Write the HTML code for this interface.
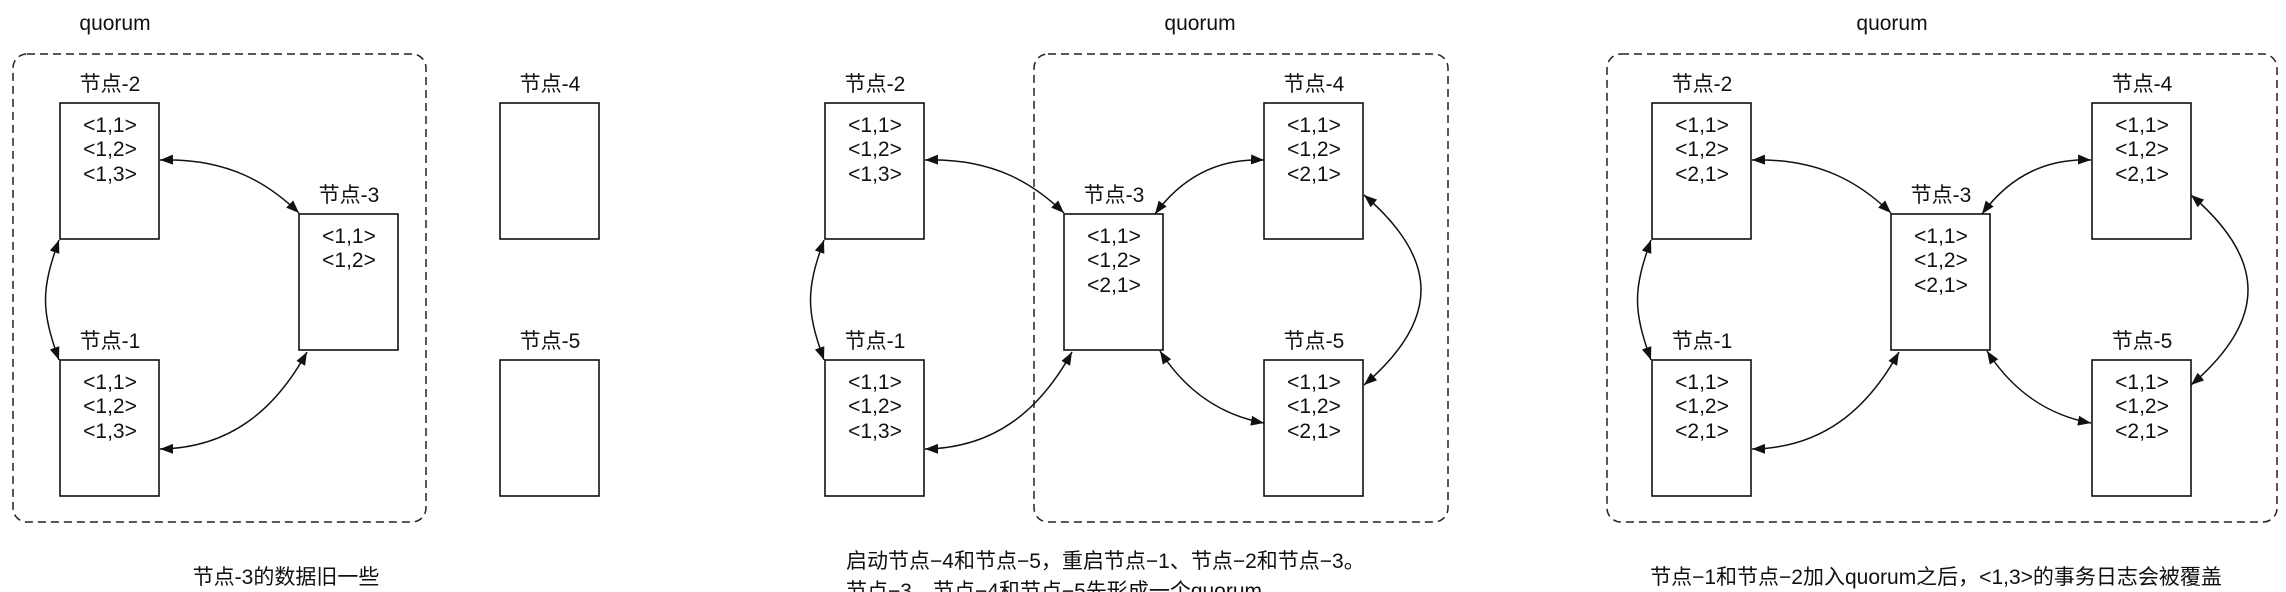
<!DOCTYPE html>
<html><head><meta charset="utf-8"><style>
html,body{margin:0;padding:0;background:#fff;}
svg{display:block;}
text{font-family:"Liberation Sans","Noto Sans CJK SC",sans-serif;font-size:21px;fill:#111;}
.c{text-anchor:middle;}
.b{fill:#fff;stroke:#111;stroke-width:1.6;}
.d{fill:none;stroke:#222;stroke-width:1.5;stroke-dasharray:8 5;}
.a{fill:none;stroke:#111;stroke-width:1.5;marker-start:url(#m);marker-end:url(#m);}
</style></head><body>
<svg width="2286" height="592" viewBox="0 0 2286 592" xmlns="http://www.w3.org/2000/svg">
<defs>
<marker id="m" markerWidth="14" markerHeight="12" refX="13" refY="5" orient="auto-start-reverse" markerUnits="userSpaceOnUse"><path d="M0,0 L13,5 L0,10 Z" fill="#111"/></marker>
</defs>

<!-- Panel 1 -->
<text class="c" x="115" y="30">quorum</text>
<rect class="d" x="13" y="54" width="413" height="468" rx="14"/>
<path class="a" d="M160,160 C230,158 270,185 299,213"/>
<path class="a" d="M160,449 C230,448 275,410 307,352"/>
<path class="a" d="M59,240 C41,290 41,310 59,360"/>
<text class="c" x="110" y="91">节点-2</text>
<rect class="b" x="60" y="103" width="99" height="136"/>
<text class="c" x="110" y="132">&lt;1,1&gt;</text><text class="c" x="110" y="156">&lt;1,2&gt;</text><text class="c" x="110" y="181">&lt;1,3&gt;</text>
<text class="c" x="349" y="202">节点-3</text>
<rect class="b" x="299" y="214" width="99" height="136"/>
<text class="c" x="349" y="243">&lt;1,1&gt;</text><text class="c" x="349" y="267">&lt;1,2&gt;</text>
<text class="c" x="110" y="348">节点-1</text>
<rect class="b" x="60" y="360" width="99" height="136"/>
<text class="c" x="110" y="389">&lt;1,1&gt;</text><text class="c" x="110" y="413">&lt;1,2&gt;</text><text class="c" x="110" y="438">&lt;1,3&gt;</text>
<text class="c" x="550" y="91">节点-4</text>
<rect class="b" x="500" y="103" width="99" height="136"/>
<text class="c" x="550" y="348">节点-5</text>
<rect class="b" x="500" y="360" width="99" height="136"/>
<text class="c" x="286" y="584">节点-3的数据旧一些</text>

<!-- Panel 2 -->
<text class="c" x="1200" y="30">quorum</text>
<rect class="d" x="1034" y="54" width="414" height="468" rx="14"/>
<path class="a" d="M925,160 C995,158 1035,185 1064,213"/>
<path class="a" d="M925,449 C995,448 1040,410 1072,352"/>
<path class="a" d="M824,240 C806,290 806,310 824,360"/>
<path class="a" d="M1264,160 C1215,158 1180,180 1155,214"/>
<path class="a" d="M1160,351 C1185,390 1220,415 1264,423"/>
<path class="a" d="M1364,195 C1440,260 1440,320 1364,385"/>
<text class="c" x="875" y="91">节点-2</text>
<rect class="b" x="825" y="103" width="99" height="136"/>
<text class="c" x="875" y="132">&lt;1,1&gt;</text><text class="c" x="875" y="156">&lt;1,2&gt;</text><text class="c" x="875" y="181">&lt;1,3&gt;</text>
<text class="c" x="875" y="348">节点-1</text>
<rect class="b" x="825" y="360" width="99" height="136"/>
<text class="c" x="875" y="389">&lt;1,1&gt;</text><text class="c" x="875" y="413">&lt;1,2&gt;</text><text class="c" x="875" y="438">&lt;1,3&gt;</text>
<text class="c" x="1114" y="202">节点-3</text>
<rect class="b" x="1064" y="214" width="99" height="136"/>
<text class="c" x="1114" y="243">&lt;1,1&gt;</text><text class="c" x="1114" y="267">&lt;1,2&gt;</text><text class="c" x="1114" y="292">&lt;2,1&gt;</text>
<text class="c" x="1314" y="91">节点-4</text>
<rect class="b" x="1264" y="103" width="99" height="136"/>
<text class="c" x="1314" y="132">&lt;1,1&gt;</text><text class="c" x="1314" y="156">&lt;1,2&gt;</text><text class="c" x="1314" y="181">&lt;2,1&gt;</text>
<text class="c" x="1314" y="348">节点-5</text>
<rect class="b" x="1264" y="360" width="99" height="136"/>
<text class="c" x="1314" y="389">&lt;1,1&gt;</text><text class="c" x="1314" y="413">&lt;1,2&gt;</text><text class="c" x="1314" y="438">&lt;2,1&gt;</text>
<text x="846" y="568">启动节点−4和节点−5，重启节点−1、节点−2和节点−3。</text>
<text x="846" y="598">节点−3、节点−4和节点−5先形成一个quorum</text>

<!-- Panel 3 -->
<text class="c" x="1892" y="30">quorum</text>
<rect class="d" x="1607" y="54" width="670" height="468" rx="14"/>
<path class="a" d="M1752,160 C1822,158 1862,185 1891,213"/>
<path class="a" d="M1752,449 C1822,448 1867,410 1899,352"/>
<path class="a" d="M1651,240 C1633,290 1633,310 1651,360"/>
<path class="a" d="M2091,160 C2042,158 2007,180 1982,214"/>
<path class="a" d="M1987,351 C2012,390 2047,415 2091,423"/>
<path class="a" d="M2191,195 C2267,260 2267,320 2191,385"/>
<text class="c" x="1702" y="91">节点-2</text>
<rect class="b" x="1652" y="103" width="99" height="136"/>
<text class="c" x="1702" y="132">&lt;1,1&gt;</text><text class="c" x="1702" y="156">&lt;1,2&gt;</text><text class="c" x="1702" y="181">&lt;2,1&gt;</text>
<text class="c" x="1702" y="348">节点-1</text>
<rect class="b" x="1652" y="360" width="99" height="136"/>
<text class="c" x="1702" y="389">&lt;1,1&gt;</text><text class="c" x="1702" y="413">&lt;1,2&gt;</text><text class="c" x="1702" y="438">&lt;2,1&gt;</text>
<text class="c" x="1941" y="202">节点-3</text>
<rect class="b" x="1891" y="214" width="99" height="136"/>
<text class="c" x="1941" y="243">&lt;1,1&gt;</text><text class="c" x="1941" y="267">&lt;1,2&gt;</text><text class="c" x="1941" y="292">&lt;2,1&gt;</text>
<text class="c" x="2142" y="91">节点-4</text>
<rect class="b" x="2092" y="103" width="99" height="136"/>
<text class="c" x="2142" y="132">&lt;1,1&gt;</text><text class="c" x="2142" y="156">&lt;1,2&gt;</text><text class="c" x="2142" y="181">&lt;2,1&gt;</text>
<text class="c" x="2142" y="348">节点-5</text>
<rect class="b" x="2092" y="360" width="99" height="136"/>
<text class="c" x="2142" y="389">&lt;1,1&gt;</text><text class="c" x="2142" y="413">&lt;1,2&gt;</text><text class="c" x="2142" y="438">&lt;2,1&gt;</text>
<text class="c" x="1936" y="584">节点−1和节点−2加入quorum之后，&lt;1,3&gt;的事务日志会被覆盖</text>
</svg>
</body></html>
